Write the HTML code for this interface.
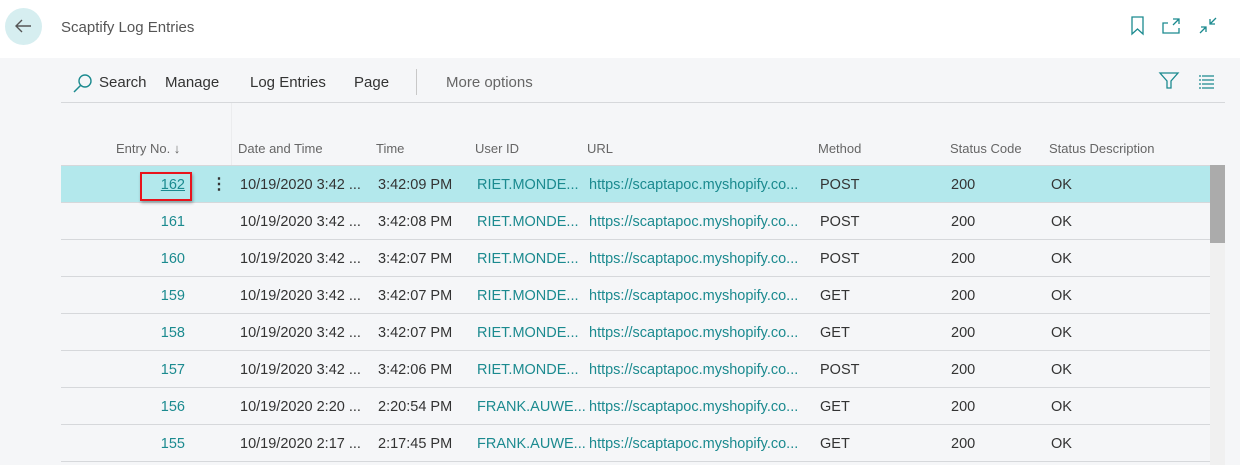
<!DOCTYPE html>
<html><head><meta charset="utf-8"><style>
*{margin:0;padding:0;box-sizing:border-box}
body{width:1240px;height:465px;overflow:hidden;background:#f5f6f8;font-family:"Liberation Sans",sans-serif;color:#333;position:relative}
.top{position:absolute;left:0;top:0;width:1240px;height:58px;background:#fff}
.a{position:absolute;white-space:nowrap}
.tb{font-size:15px;color:#333;top:74px}
.hd{font-size:13px;color:#666;top:141px}
.row{position:absolute;left:61px;width:1149px;height:37px;border-bottom:1px solid #d6d8db}
.c{position:absolute;top:11px;font-size:14.5px;white-space:nowrap;color:#333}
.l{color:#1b8a8f}
</style></head><body>
<div class="top"></div>
<div class="a" style="left:5px;top:8px;width:37px;height:37px;border-radius:50%;background:#d6eef0"></div>
<svg class="a" style="left:12px;top:15px" width="22" height="22" viewBox="0 0 22 22"><path d="M19 11H4M10 5L4 11L10 17" stroke="#555" stroke-width="1.4" fill="none"/></svg>
<div class="a" style="left:61px;top:19px;font-size:15px;color:#555">Scaptify Log Entries</div>
<svg class="a" style="left:1128px;top:15px" width="100" height="22" viewBox="0 0 100 22"><path d="M4 2H15V19L9.5 14L4 19Z" stroke="#1b8a8f" stroke-width="1.3" fill="none"/><path d="M40 8H35V18H51V13M45 4H51V9M51 4L45 10" stroke="#1b8a8f" stroke-width="1.3" fill="none"/><path d="M72 18L78 12M73 12H78V17M88 3L82 9M82 4V9H87" stroke="#1b8a8f" stroke-width="1.3" fill="none"/></svg>
<svg class="a" style="left:72px;top:73px" width="22" height="22" viewBox="0 0 22 22"><circle cx="13" cy="8" r="6" stroke="#1b8a8f" stroke-width="1.4" fill="none"/><path d="M9 12L2 19" stroke="#1b8a8f" stroke-width="1.5"/></svg>
<div class="a tb" style="left:99px">Search</div>
<div class="a tb" style="left:165px">Manage</div>
<div class="a tb" style="left:250px">Log Entries</div>
<div class="a tb" style="left:354px">Page</div>
<div class="a" style="left:416px;top:69px;width:1px;height:26px;background:#c8c8c8"></div>
<div class="a tb" style="left:446px;color:#666">More options</div>
<svg class="a" style="left:1158px;top:70px" width="70" height="22" viewBox="0 0 70 22"><path d="M2 3H20L13 11V18H9V11Z" stroke="#1b8a8f" stroke-width="1.3" fill="none"/><path d="M41 6H56M41 10H56M41 14H56M41 18H56" stroke="#1b8a8f" stroke-width="1.2" stroke-dasharray="2 1 12 0"/></svg>
<div class="a" style="left:61px;top:102px;width:1164px;height:1px;background:#d6d8db"></div>
<div class="a" style="left:231px;top:103px;width:1px;height:63px;background:#ebecee"></div>
<div class="a hd" style="left:116px">Entry No. ↓</div>
<div class="a hd" style="left:238px">Date and Time</div>
<div class="a hd" style="left:376px">Time</div>
<div class="a hd" style="left:475px">User ID</div>
<div class="a hd" style="left:587px">URL</div>
<div class="a hd" style="left:818px">Method</div>
<div class="a hd" style="left:950px">Status Code</div>
<div class="a hd" style="left:1049px">Status Description</div>
<div class="a" style="left:61px;top:165px;width:1149px;height:1px;background:#d6d8db"></div>

<div class="row" style="top:166px;background:#b3e8ec"><div class="c l" style="right:1025px;text-decoration:underline">162</div><div class="c" style="left:150px;top:8px;font-size:16px;font-weight:bold">⋮</div><div class="c" style="left:179px">10/19/2020 3:42 ...</div><div class="c" style="left:317px">3:42:09 PM</div><div class="c l" style="left:416px">RIET.MONDE...</div><div class="c l" style="left:528px">https://scaptapoc.myshopify.co...</div><div class="c" style="left:759px">POST</div><div class="c" style="left:890px">200</div><div class="c" style="left:990px">OK</div></div>
<div class="row" style="top:203px"><div class="c l" style="right:1025px">161</div><div class="c" style="left:179px">10/19/2020 3:42 ...</div><div class="c" style="left:317px">3:42:08 PM</div><div class="c l" style="left:416px">RIET.MONDE...</div><div class="c l" style="left:528px">https://scaptapoc.myshopify.co...</div><div class="c" style="left:759px">POST</div><div class="c" style="left:890px">200</div><div class="c" style="left:990px">OK</div></div>
<div class="row" style="top:240px"><div class="c l" style="right:1025px">160</div><div class="c" style="left:179px">10/19/2020 3:42 ...</div><div class="c" style="left:317px">3:42:07 PM</div><div class="c l" style="left:416px">RIET.MONDE...</div><div class="c l" style="left:528px">https://scaptapoc.myshopify.co...</div><div class="c" style="left:759px">POST</div><div class="c" style="left:890px">200</div><div class="c" style="left:990px">OK</div></div>
<div class="row" style="top:277px"><div class="c l" style="right:1025px">159</div><div class="c" style="left:179px">10/19/2020 3:42 ...</div><div class="c" style="left:317px">3:42:07 PM</div><div class="c l" style="left:416px">RIET.MONDE...</div><div class="c l" style="left:528px">https://scaptapoc.myshopify.co...</div><div class="c" style="left:759px">GET</div><div class="c" style="left:890px">200</div><div class="c" style="left:990px">OK</div></div>
<div class="row" style="top:314px"><div class="c l" style="right:1025px">158</div><div class="c" style="left:179px">10/19/2020 3:42 ...</div><div class="c" style="left:317px">3:42:07 PM</div><div class="c l" style="left:416px">RIET.MONDE...</div><div class="c l" style="left:528px">https://scaptapoc.myshopify.co...</div><div class="c" style="left:759px">GET</div><div class="c" style="left:890px">200</div><div class="c" style="left:990px">OK</div></div>
<div class="row" style="top:351px"><div class="c l" style="right:1025px">157</div><div class="c" style="left:179px">10/19/2020 3:42 ...</div><div class="c" style="left:317px">3:42:06 PM</div><div class="c l" style="left:416px">RIET.MONDE...</div><div class="c l" style="left:528px">https://scaptapoc.myshopify.co...</div><div class="c" style="left:759px">POST</div><div class="c" style="left:890px">200</div><div class="c" style="left:990px">OK</div></div>
<div class="row" style="top:388px"><div class="c l" style="right:1025px">156</div><div class="c" style="left:179px">10/19/2020 2:20 ...</div><div class="c" style="left:317px">2:20:54 PM</div><div class="c l" style="left:416px">FRANK.AUWE...</div><div class="c l" style="left:528px">https://scaptapoc.myshopify.co...</div><div class="c" style="left:759px">GET</div><div class="c" style="left:890px">200</div><div class="c" style="left:990px">OK</div></div>
<div class="row" style="top:425px"><div class="c l" style="right:1025px">155</div><div class="c" style="left:179px">10/19/2020 2:17 ...</div><div class="c" style="left:317px">2:17:45 PM</div><div class="c l" style="left:416px">FRANK.AUWE...</div><div class="c l" style="left:528px">https://scaptapoc.myshopify.co...</div><div class="c" style="left:759px">GET</div><div class="c" style="left:890px">200</div><div class="c" style="left:990px">OK</div></div>

<div class="a" style="left:140px;top:172px;width:52px;height:29px;border:2px solid #e8141c;box-shadow:1px 2px 3px rgba(0,0,0,.3)"></div>
<div class="a" style="left:1210px;top:165px;width:15px;height:300px;background:#f0f0f0"></div>
<div class="a" style="left:1210px;top:165px;width:15px;height:78px;background:#ababab"></div>
</body></html>
